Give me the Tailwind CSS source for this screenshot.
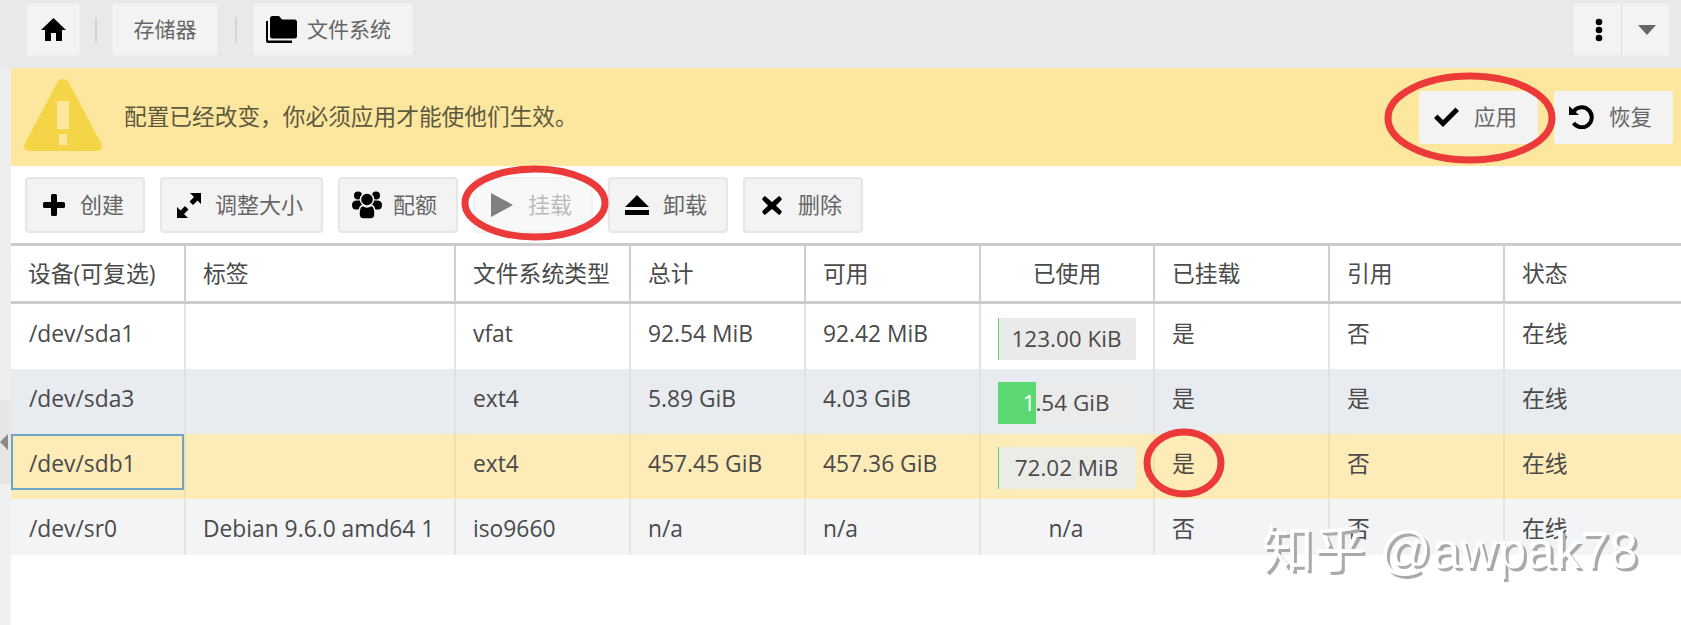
<!DOCTYPE html>
<html lang="zh-CN">
<head>
<meta charset="utf-8">
<script src="https://cdn.jsdelivr.net/npm/@tailwindcss/browser@4"></script>
<title>文件系统</title>
</head>
<body class="relative w-[1681px] h-[625px] overflow-hidden bg-white font-['Open_Sans','Noto_Sans_CJK_SC',sans-serif] text-[#444]">

<!-- top bar -->
<header class="h-[68px] bg-[#e9e9e9] flex items-start justify-between pt-[3px] pl-[26px] pr-[11px]">
  <nav class="flex items-center h-[53px]">
    <button class="w-[54px] h-[53px] bg-[#f3f3f3] border border-[#eeeeee] rounded-[3px] flex items-center justify-center">
      <svg class="w-[25px] h-[23px]" viewBox="0 0 25 23"><path fill="#000" d="M12.500 0 L25 12 H21 V23 H15 V15 H10 V23 H4 V12 H0 Z"/></svg>
    </button>
    <span class="w-[2px] h-[26px] bg-[#d4d4d4] ml-[15px] mr-[15px]"></span>
    <button class="w-[106px] h-[53px] bg-[#f3f3f3] border border-[#eeeeee] rounded-[3px] text-[21px] text-[#666]">存储器</button>
    <span class="w-[2px] h-[26px] bg-[#d4d4d4] ml-[17px] mr-[16px]"></span>
    <button class="w-[160px] h-[53px] bg-[#f3f3f3] border border-[#eeeeee] rounded-[3px] text-[21px] text-[#666] flex items-center pl-[12px] gap-[10px]">
      <svg class="w-[31px] h-[27px]" viewBox="0 0 31 27"><path fill="#000" d="M4 2.500 Q4 0 6.500 0 H13 L16 3.500 H28.500 Q31 3.500 31 6 V20 Q31 22.500 28.500 22.500 H6.500 Q4 22.500 4 20 Z"/><path fill="#000" d="M0 5 H2 V24.500 H26 V27 H2 Q0 27 0 25 Z"/></svg>
      <span>文件系统</span>
    </button>
  </nav>
  <div class="w-[97px] h-[53px] bg-[#f3f3f3] border border-[#eeeeee] rounded-[3px] flex">
    <span class="w-[48px] pl-[3px] border-r border-[#dddddd] flex items-center justify-center">
      <svg class="w-[8px] h-[24px]" viewBox="0 0 8 24"><circle cx="4" cy="4" r="3.300" fill="#000"/><circle cx="4" cy="12" r="3.300" fill="#000"/><circle cx="4" cy="20" r="3.300" fill="#000"/></svg>
    </span>
    <span class="flex-1 pl-[2px] flex items-center justify-center">
      <svg class="w-[18px] h-[10px]" viewBox="0 0 18 10"><path fill="#666" d="M0 0 H18 L9 10 Z"/></svg>
    </span>
  </div>
</header>

<div class="flex h-[557px]">
  <!-- left strip -->
  <aside class="w-[11px] shrink-0 flex flex-col bg-[#f0f0f0]">
    <div class="h-[332px] bg-[#eeeeee]"></div>
    <div class="h-[84px] bg-[#e6e6e6] flex items-center">
      <svg class="w-[8px] h-[16px]" viewBox="0 0 8 16"><path fill="#8a8a84" d="M8 0 V16 L0 8 Z"/></svg>
    </div>
  </aside>

  <main class="flex-1 min-w-0">
    <!-- warning -->
    <section class="h-[98px] bg-[#fde69d] flex items-center justify-between pl-[13px] pr-[8px]">
      <div class="flex items-center">
        <svg class="w-[78px] h-[72px] mb-[4px]" viewBox="0 0 78 72"><path fill="#f5d548" fill-rule="evenodd" d="M39 0 Q43 0 45 4 L77 64 Q80 72 72 72 H6 Q-2 72 1 64 L33 4 Q35 0 39 0 Z M33 22 V50 H45 V22 Z M35 55 V66 H43 V55 Z"/></svg>
        <p class="ml-[22px] text-[22.700px] text-[#5c5a3f] whitespace-nowrap">配置已经改变，你必须应用才能使他们生效。</p>
      </div>
      <div class="flex gap-[16px]">
        <button class="w-[119px] h-[53px] bg-[#f3f3f3] rounded-[3px] flex items-center pl-[15px] text-[21.500px] text-[#666]">
          <svg class="w-[25px] h-[20px] shrink-0" viewBox="0 0 25 20"><path fill="#000" d="M0 11 L3.500 7.500 L9 13 L21.500 0.500 L25 4 L9 20 Z"/></svg>
          <span class="ml-[15px]">应用</span>
        </button>
        <button class="w-[119px] h-[53px] bg-[#f3f3f3] rounded-[3px] flex items-center pl-[15px] text-[21.500px] text-[#666]">
          <svg class="w-[25px] h-[24px] shrink-0" viewBox="0 0 25 24"><path fill="none" stroke="#000" stroke-width="4" d="M5 6 A10 10 0 1 1 4.500 18"/><path fill="#000" d="M0 1 L10 10 H0 Z"/></svg>
          <span class="ml-[15px]">恢复</span>
        </button>
      </div>
    </section>

    <!-- toolbar -->
    <div class="h-[77px] flex items-start gap-[15px] pt-[11px] pl-[14px] text-[22px] text-[#666]">
      <button class="h-[56px] w-[120px] bg-[#f3f3f3] border-2 border-[#e6e6e6] rounded-[4px] flex items-center pl-[12px]">
        <span class="w-[30px] flex justify-center"><svg class="w-[22px] h-[22px]" viewBox="0 0 22 22"><path fill="#000" d="M8 1.500 Q8 0 9.500 0 H12.500 Q14 0 14 1.500 V8 H20.500 Q22 8 22 9.500 V12.500 Q22 14 20.500 14 H14 V20.500 Q14 22 12.500 22 H9.500 Q8 22 8 20.500 V14 H1.500 Q0 14 0 12.500 V9.500 Q0 8 1.500 8 H8 Z"/></svg></span>
        <span class="ml-[11px] pb-[2px]">创建</span>
      </button>
      <button class="h-[56px] w-[163px] bg-[#f3f3f3] border-2 border-[#e6e6e6] rounded-[4px] flex items-center pl-[12px]">
        <span class="w-[30px] flex justify-center"><svg class="w-[24px] h-[25px]" viewBox="0 0 24 25"><path fill="#000" d="M13 0 H24 V11 L20.500 7.500 L16 12 L12.500 8.500 L17 4 Z M11 25 H0 V14 L3.500 17.500 L8 13 L11.500 16.500 L7 21 Z"/></svg></span>
        <span class="ml-[11px] pb-[2px]">调整大小</span>
      </button>
      <button class="h-[56px] w-[120px] bg-[#f3f3f3] border-2 border-[#e6e6e6] rounded-[4px] flex items-center pl-[12px]">
        <span class="w-[30px] flex justify-center"><svg class="w-[30px] h-[28px]" viewBox="0 0 30 28"><circle cx="6" cy="4.500" r="4" fill="#000"/><circle cx="24" cy="4.500" r="4" fill="#000"/><path fill="#000" d="M0 14 Q0 9.500 5 9.500 H25 Q30 9.500 30 14 Q30 18.500 26 18.500 H4 Q0 18.500 0 14 Z"/><circle cx="15" cy="8.500" r="6.500" fill="#000" stroke="#f3f3f3" stroke-width="1.500"/><path fill="#000" stroke="#f3f3f3" stroke-width="1.500" d="M7 23 Q7 14.500 11 14.500 Q15 17.500 19 14.500 Q23 14.500 23 23 Q23 28 18.500 28 H11.500 Q7 28 7 23 Z"/></svg></span>
        <span class="ml-[11px] pb-[2px]">配额</span>
      </button>
      <button class="h-[56px] w-[120px] bg-[#f8f8f8] border-2 border-[#f1f1f1] rounded-[4px] flex items-center pl-[12px] text-[#bbbbbb]">
        <span class="w-[30px] flex justify-center"><svg class="w-[22px] h-[24px]" viewBox="0 0 22 24"><path fill="#808080" d="M0 0 L22 12 L0 24 Z"/></svg></span>
        <span class="ml-[11px] pb-[2px]">挂载</span>
      </button>
      <button class="h-[56px] w-[120px] bg-[#f3f3f3] border-2 border-[#e6e6e6] rounded-[4px] flex items-center pl-[12px]">
        <span class="w-[30px] flex justify-center"><svg class="w-[24px] h-[20px]" viewBox="0 0 24 20"><path fill="#000" d="M12 0 L24 12 H0 Z M0 15 H24 V20 H0 Z"/></svg></span>
        <span class="ml-[11px] pb-[2px]">卸载</span>
      </button>
      <button class="h-[56px] w-[120px] bg-[#f3f3f3] border-2 border-[#e6e6e6] rounded-[4px] flex items-center pl-[12px]">
        <span class="w-[30px] flex justify-center"><svg class="w-[20px] h-[19px]" viewBox="0 0 20 19"><path fill="#000" d="M3.500 0.500 L10 6 L16.500 0.500 Q17.500 0 18 0.500 L19.500 2.500 Q20 3.500 19.500 4 L14 9.500 L19.500 15 Q20 15.500 19.500 16.500 L18 18.500 Q17.500 19 16.500 18.500 L10 13 L3.500 18.500 Q2.500 19 2 18.500 L0.500 16.500 Q0 15.500 0.500 15 L6 9.500 L0.500 4 Q0 3.500 0.500 2.500 L2 0.500 Q2.500 0 3.500 0.500 Z"/></svg></span>
        <span class="ml-[11px] pb-[2px]">删除</span>
      </button>
    </div>

    <!-- table -->
    <table class="table-fixed border-collapse w-[1670px] text-[22.800px] text-[#4a4a4a]">
      <colgroup>
        <col class="w-[174px]"><col class="w-[270px]"><col class="w-[175px]"><col class="w-[175px]"><col class="w-[175px]"><col class="w-[174px]"><col class="w-[175px]"><col class="w-[175px]"><col class="w-[177px]">
      </colgroup>
      <thead>
        <tr class="h-[58px] border-y-[3px] border-[#cccccc] text-left">
          <th class="font-normal pt-[2px] pl-[17px] border-r-2 border-[#cfcfcf] whitespace-nowrap">设备(可复选)</th>
          <th class="font-normal pt-[2px] pl-[17px] border-r-2 border-[#cfcfcf]">标签</th>
          <th class="font-normal pt-[2px] pl-[17px] border-r-2 border-[#cfcfcf] whitespace-nowrap">文件系统类型</th>
          <th class="font-normal pt-[2px] pl-[17px] border-r-2 border-[#cfcfcf]">总计</th>
          <th class="font-normal pt-[2px] pl-[17px] border-r-2 border-[#cfcfcf]">可用</th>
          <th class="font-normal pt-[2px] text-center border-r-2 border-[#cfcfcf]">已使用</th>
          <th class="font-normal pt-[2px] pl-[17px] border-r-2 border-[#cfcfcf]">已挂载</th>
          <th class="font-normal pt-[2px] pl-[17px] border-r-2 border-[#cfcfcf]">引用</th>
          <th class="font-normal pt-[2px] pl-[17px]">状态</th>
        </tr>
      </thead>
      <tbody>
        <tr class="h-[66px] bg-white">
          <td class="align-top pt-[15px] pl-[18px] leading-[30px] border-r-2 border-[#e3e3e3]">/dev/sda1</td>
          <td class="align-top pt-[15px] pl-[17px] leading-[30px] border-r-2 border-[#e3e3e3]"></td>
          <td class="align-top pt-[15px] pl-[17px] leading-[30px] border-r-2 border-[#e3e3e3]">vfat</td>
          <td class="align-top pt-[15px] pl-[17px] leading-[30px] border-r-2 border-[#e3e3e3]">92.54 MiB</td>
          <td class="align-top pt-[15px] pl-[17px] leading-[30px] border-r-2 border-[#e3e3e3]">92.42 MiB</td>
          <td class="align-top pt-[14px] pl-[17px] border-r-2 border-[#e3e3e3]">
            <div class="relative w-[138px] h-[42px] bg-[#eaeaea] border-l border-[#62cf78] text-[22.500px] pr-[2px] flex items-center justify-center">123.00 KiB</div>
          </td>
          <td class="align-top pt-[15px] pl-[17px] leading-[30px] border-r-2 border-[#e3e3e3]">是</td>
          <td class="align-top pt-[15px] pl-[17px] leading-[30px] border-r-2 border-[#e3e3e3]">否</td>
          <td class="align-top pt-[15px] pl-[17px] leading-[30px]">在线</td>
        </tr>
        <tr class="h-[65px] bg-[#e8ebef]">
          <td class="align-top pt-[15px] pl-[18px] leading-[30px] border-r-2 border-[#e0e2e5]">/dev/sda3</td>
          <td class="align-top pt-[15px] pl-[17px] leading-[30px] border-r-2 border-[#e0e2e5]"></td>
          <td class="align-top pt-[15px] pl-[17px] leading-[30px] border-r-2 border-[#e0e2e5]">ext4</td>
          <td class="align-top pt-[15px] pl-[17px] leading-[30px] border-r-2 border-[#e0e2e5]">5.89 GiB</td>
          <td class="align-top pt-[15px] pl-[17px] leading-[30px] border-r-2 border-[#e0e2e5]">4.03 GiB</td>
          <td class="align-top pt-[13px] pl-[17px] border-r-2 border-[#e0e2e5]">
            <div class="relative w-[138px] h-[42px] bg-[#ebebeb] text-[22.500px] pr-[2px] flex items-center justify-center">
              <span class="absolute left-0 inset-y-0 w-[38px] bg-[#5bd872]"></span>
              <span class="relative"><span class="text-white">1</span>.54 GiB</span>
            </div>
          </td>
          <td class="align-top pt-[15px] pl-[17px] leading-[30px] border-r-2 border-[#e0e2e5]">是</td>
          <td class="align-top pt-[15px] pl-[17px] leading-[30px] border-r-2 border-[#e0e2e5]">是</td>
          <td class="align-top pt-[15px] pl-[17px] leading-[30px]">在线</td>
        </tr>
        <tr class="h-[65px] bg-[#fdebb8]">
          <td class="relative align-top pt-[15px] pl-[18px] leading-[30px] border-r-2 border-[#eee0b0]">/dev/sdb1
            <span class="absolute left-0 top-0 w-[173px] h-[56px] border-2 border-[#6fa5c4]"></span>
          </td>
          <td class="align-top pt-[15px] pl-[17px] leading-[30px] border-r-2 border-[#eee0b0]"></td>
          <td class="align-top pt-[15px] pl-[17px] leading-[30px] border-r-2 border-[#eee0b0]">ext4</td>
          <td class="align-top pt-[15px] pl-[17px] leading-[30px] border-r-2 border-[#eee0b0]">457.45 GiB</td>
          <td class="align-top pt-[15px] pl-[17px] leading-[30px] border-r-2 border-[#eee0b0]">457.36 GiB</td>
          <td class="align-top pt-[13px] pl-[17px] border-r-2 border-[#eee0b0]">
            <div class="relative w-[138px] h-[42px] bg-[#ebebe8] border-l border-[#62cf78] text-[22.500px] pr-[2px] flex items-center justify-center">72.02 MiB</div>
          </td>
          <td class="align-top pt-[15px] pl-[17px] leading-[30px] border-r-2 border-[#eee0b0]">是</td>
          <td class="align-top pt-[15px] pl-[17px] leading-[30px] border-r-2 border-[#eee0b0]">否</td>
          <td class="align-top pt-[15px] pl-[17px] leading-[30px]">在线</td>
        </tr>
        <tr class="h-[56px] bg-[#f3f4f6]">
          <td class="align-top pt-[15px] pl-[18px] leading-[30px] border-r-2 border-[#e3e4e6]">/dev/sr0</td>
          <td class="align-top pt-[15px] pl-[17px] leading-[30px] border-r-2 border-[#e3e4e6] whitespace-nowrap">Debian 9.6.0 amd64 1</td>
          <td class="align-top pt-[15px] pl-[17px] leading-[30px] border-r-2 border-[#e3e4e6]">iso9660</td>
          <td class="align-top pt-[15px] pl-[17px] leading-[30px] border-r-2 border-[#e3e4e6]">n/a</td>
          <td class="align-top pt-[15px] pl-[17px] leading-[30px] border-r-2 border-[#e3e4e6]">n/a</td>
          <td class="align-top pt-[15px] pr-[2px] leading-[30px] text-center border-r-2 border-[#e3e4e6]">n/a</td>
          <td class="align-top pt-[15px] pl-[17px] leading-[30px] border-r-2 border-[#e3e4e6]">否</td>
          <td class="align-top pt-[15px] pl-[17px] leading-[30px] border-r-2 border-[#e3e4e6]">否</td>
          <td class="align-top pt-[15px] pl-[17px] leading-[30px]">在线</td>
        </tr>
      </tbody>
    </table>
  </main>
</div>

<!-- hand-drawn annotation marks over the page -->
<svg class="absolute left-0 top-0 w-[1681px] h-[625px] pointer-events-none" viewBox="0 0 1681 625">
  <ellipse cx="1470" cy="118" rx="82" ry="42" fill="none" stroke="#ec3a3a" stroke-width="7"/>
  <ellipse cx="535" cy="203" rx="70" ry="34" fill="none" stroke="#ec3a3a" stroke-width="7"/>
  <ellipse cx="1184" cy="463" rx="37" ry="31" fill="none" stroke="#ec3a3a" stroke-width="7"/>
</svg>

<!-- watermark -->
<div class="absolute left-[1262px] top-[515px] text-[51.500px] leading-[70px] whitespace-nowrap text-white font-['Liberation_Sans','Noto_Sans_CJK_SC',sans-serif] [text-shadow:3px_3px_0_#aaaaaa]">知乎 @awpak78</div>

</body>
</html>
